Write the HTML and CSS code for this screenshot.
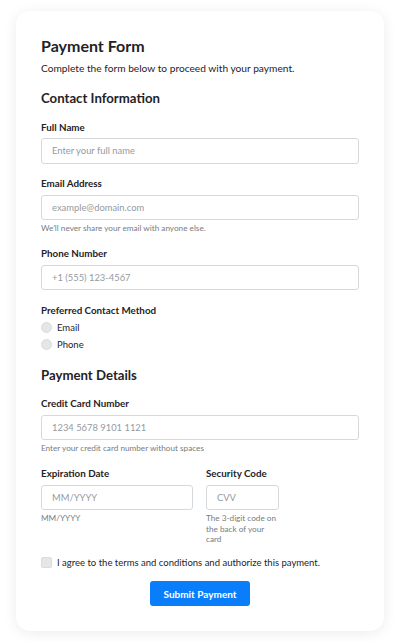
FILE: index.html
```html
<!DOCTYPE html>
<html lang="en">
<head>
    <meta charset="UTF-8">
    <meta name="viewport" content="width=device-width, initial-scale=1.0">
    <title>Payment Form</title>
    <link rel="stylesheet" href="styles.css">
</head>
<body>
    <div class="page">
        <form class="card">
            <h1 class="form-title">Payment Form</h1>
            <p class="form-lead">Complete the form below to proceed with your payment.</p>

            <h2 class="section-title">Contact Information</h2>

            <div class="field">
                <label class="field-label" for="fullName">Full Name</label>
                <input class="field-input" id="fullName" type="text" placeholder="Enter your full name">
            </div>

            <div class="field">
                <label class="field-label" for="email">Email Address</label>
                <input class="field-input" id="email" type="email" placeholder="example@domain.com">
                <div class="help">We'll never share your email with anyone else.</div>
            </div>

            <div class="field">
                <label class="field-label" for="phone">Phone Number</label>
                <input class="field-input" id="phone" type="tel" placeholder="+1 (555) 123-4567">
            </div>

            <div class="field">
                <div class="field-label group-label">Preferred Contact Method</div>
                <label class="choice"><input class="radio" type="radio" name="contact"> Email</label>
                <label class="choice"><input class="radio" type="radio" name="contact"> Phone</label>
            </div>

            <h2 class="section-title section-gap">Payment Details</h2>

            <div class="field">
                <label class="field-label" for="card">Credit Card Number</label>
                <input class="field-input" id="card" type="text" placeholder="1234 5678 9101 1121">
                <div class="help">Enter your credit card number without spaces</div>
            </div>

            <div class="field-row">
                <div class="field">
                    <label class="field-label" for="exp">Expiration Date</label>
                    <input class="field-input" id="exp" type="text" placeholder="MM/YYYY">
                    <div class="help">MM/YYYY</div>
                </div>
                <div class="field">
                    <label class="field-label" for="cvv">Security Code</label>
                    <input class="field-input" id="cvv" type="text" placeholder="CVV">
                    <div class="help">The 3-digit code on the back of your card</div>
                </div>
            </div>

            <label class="choice agree"><input class="check" type="checkbox"> I agree to the terms and conditions and authorize this payment.</label>

            <div class="actions">
                <button class="btn" type="submit">Submit Payment</button>
            </div>
        </form>
    </div>
</body>
</html>
```

FILE: styles.css
```css
body {
    margin: 0;
    background: #ffffff;
    color: #1f2327;
    font-family: 'Lato', 'Noto Sans', sans-serif;
}
.page {
    padding: 11px 16px 12px;
}
.card {
    background: #ffffff;
    border-radius: 14px;
    box-shadow: 0 2px 14px rgba(0, 0, 0, 0.08);
    padding: 25px;
}
.form-title {
    font-size: 16px;
    line-height: 20px;
    font-weight: 700;
    margin: 0;
}
.form-lead {
    font-size: 10.2px;
    line-height: 15px;
    margin: 5px 0 0;
}
.section-title {
    font-size: 13.2px;
    line-height: 17px;
    font-weight: 700;
    margin: 14px 0 0;
}
.section-gap {
    margin-top: 14px;
}
.field {
    margin-top: 12.5px;
}
.field-label {
    display: block;
    font-size: 9.8px;
    line-height: 14px;
    font-weight: 700;
    margin-bottom: 4.5px;
}
.group-label {
    margin-bottom: 2px;
}
.field-input {
    display: block;
    box-sizing: border-box;
    width: 100%;
    height: 25.5px;
    padding: 0 10px;
    border: 1px solid #d6d9dc;
    border-radius: 3px;
    font-family: inherit;
    font-size: 9.4px;
    color: #212529;
    background: #ffffff;
}
.field-input::placeholder {
    color: #959a9f;
}
.help {
    font-size: 8.2px;
    line-height: 10.5px;
    color: #767c82;
    margin-top: 3px;
}
.choice {
    display: flex;
    align-items: center;
    gap: 5px;
    font-size: 9.5px;
    line-height: 17px;
}
.radio,
.check {
    appearance: none;
    flex: none;
    margin: 0;
    width: 11px;
    height: 11px;
    background: #e4e6e8;
    border: 1px solid #d9dcdf;
    box-sizing: border-box;
}
.radio {
    border-radius: 50%;
}
.check {
    border-radius: 2px;
}
.field-row {
    display: grid;
    grid-template-columns: 152px 73px;
    gap: 13px;
}
.agree {
    margin-top: 9.5px;
}
.actions {
    display: flex;
    justify-content: center;
    margin-top: 10px;
}
.btn {
    width: 100px;
    height: 25px;
    border: 0;
    border-radius: 3px;
    background: #0a7dfb;
    color: #ffffff;
    font-family: inherit;
    font-size: 10px;
    font-weight: 700;
}
```
